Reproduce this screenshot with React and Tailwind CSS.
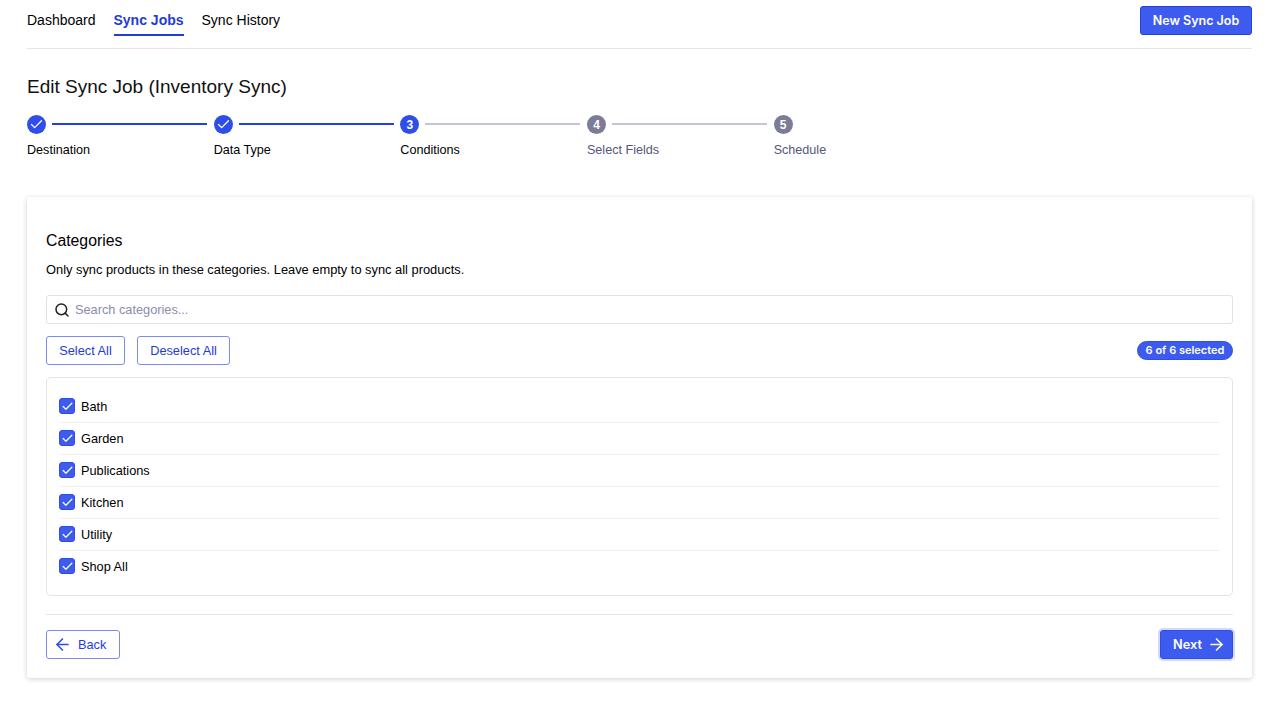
import React from 'react';
import { ArrowLeft, ArrowRight, Check, Search } from 'lucide-react';

const steps = [
  { label: 'Destination', state: 'done' },
  { label: 'Data Type', state: 'done' },
  { label: 'Conditions', state: 'active', n: 3 },
  { label: 'Select Fields', state: 'todo', n: 4 },
  { label: 'Schedule', state: 'todo', n: 5 },
];

const categories = ['Bath', 'Garden', 'Publications', 'Kitchen', 'Utility', 'Shop All'];

const Header = () => (
  <header className="h-[49px] flex justify-between border-b border-[#e6e6ea]">
    <nav className="flex gap-[18px] text-[14px] leading-[20px] text-black">
      <a className="pt-[10px]">Dashboard</a>
      <a className="pt-[10px] h-[36px] font-bold text-[#1f3bdc] border-b-2 border-[#1f3bdc]">Sync Jobs</a>
      <a className="pt-[10px]">Sync History</a>
    </nav>
    <button className="mt-[6px] h-[29px] w-[112px] pt-px rounded-[3px] bg-[#3e5bf0] border border-[#2340dc] text-white text-[12.5px] font-semibold font-['Inter',sans-serif]">
      New Sync Job
    </button>
  </header>
);

const Step = ({ step, last }) => (
  <div className={last ? 'w-[60px]' : 'w-[186.67px]'}>
    <div className="flex items-center h-[19px]">
      {step.state === 'done' && (
        <span className="w-[19px] h-[19px] shrink-0 rounded-full bg-[#2f4de8] flex items-center justify-center">
          <Check size={15} strokeWidth={2} className="text-white" />
        </span>
      )}
      {step.state === 'active' && (
        <span className="w-[19px] h-[19px] shrink-0 rounded-full bg-[#2f4de8] flex items-center justify-center text-white text-[12px] font-bold">
          {step.n}
        </span>
      )}
      {step.state === 'todo' && (
        <span className="w-[19px] h-[19px] shrink-0 rounded-full bg-[#7b7d98] flex items-center justify-center text-white text-[12px] font-bold">
          {step.n}
        </span>
      )}
      {!last && (
        <div className={`ml-[6px] mb-px w-[155px] h-[2px] ${step.state === 'done' ? 'bg-[#2440d8]' : 'bg-[#c3c3de]'}`} />
      )}
    </div>
    <div className={`mt-[7px] text-[12.6px] leading-[18px] whitespace-nowrap ${step.state === 'todo' ? 'text-[#55577a]' : 'text-black'}`}>
      {step.label}
    </div>
  </div>
);

const CategoryRow = ({ name, first }) => (
  <div className={`flex items-center h-[32px] gap-[6px] ${first ? '' : 'border-t border-[#f1f1f4] pb-px'}`}>
    <span className="w-[16px] h-[16px] rounded-[3px] bg-[#3e5bf0] border border-[#2f4de8] flex items-center justify-center">
      <Check size={13} strokeWidth={2.25} className="text-white" />
    </span>
    <span className="mt-[2px] text-[12.75px] leading-[18px] text-black">{name}</span>
  </div>
);

const App = () => {
  return (
    <div className="w-[1280px] h-[720px] bg-white pl-[27px] pr-[28px] overflow-hidden font-['Liberation_Sans',sans-serif]">
      <Header />

      <h1 className="mt-[25px] text-[19px] leading-[26px] text-[#111]">Edit Sync Job (Inventory Sync)</h1>

      <div className="flex mt-[15px]">
        {steps.map((s, i) => (
          <Step key={s.label} step={s} last={i === steps.length - 1} />
        ))}
      </div>

      <main className="mt-[38px] h-[481px] rounded-[3px] bg-white shadow-[0_1px_5px_rgba(30,30,60,0.22)] px-[19px] pt-[34px]">
        <h2 className="text-[15.8px] leading-[20px] text-black">Categories</h2>
        <p className="mt-[9px] text-[12.85px] leading-[20px] text-black">
          Only sync products in these categories. Leave empty to sync all products.
        </p>

        <div className="mt-[15px] h-[29px] flex items-center gap-[5px] px-[7px] rounded-[3px] border border-[#e2e2e6]">
          <Search size={16} strokeWidth={2.25} className="text-[#222]" />
          <span className="text-[12.75px] text-[#8c8cab]">Search categories...</span>
        </div>

        <div className="mt-[12px] flex items-center justify-between">
          <div className="flex gap-[12px]">
            <button className="h-[29px] w-[79px] rounded-[3px] border border-[#7b8cf0] text-[#1f3bdc] text-[12.75px]">Select All</button>
            <button className="h-[29px] w-[93px] rounded-[3px] border border-[#7b8cf0] text-[#1f3bdc] text-[12.75px]">Deselect All</button>
          </div>
          <span className="h-[19px] w-[96px] flex items-center justify-center rounded-full bg-[#3e5bf0] border border-[#2f4de8] text-white text-[11px] font-semibold font-['Inter',sans-serif]">
            6 of 6 selected
          </span>
        </div>

        <div className="mt-[12px] h-[219px] rounded-[5px] border border-[#e4e4e8] p-[12px]">
          {categories.map((c, i) => (
            <CategoryRow key={c} name={c} first={i === 0} />
          ))}
        </div>

        <div className="mt-[18px] pt-[15px] border-t border-[#e6e6ea] flex items-center justify-between">
          <button className="h-[29px] w-[74px] flex items-center pl-[6px] gap-[6px] rounded-[3px] border border-[#7b8cf0] text-[#1f3bdc] text-[12.75px]">
            <ArrowLeft size={19} strokeWidth={2} className="text-[#2f4de8]" />
            Back
          </button>
          <button className="h-[29px] w-[73px] flex items-center pl-[12px] gap-[5.5px] rounded-[3px] bg-[#3e5bf0] border border-[#2f4de8] ring-2 ring-[#d3dafc] text-white text-[12.75px] font-semibold font-['Inter',sans-serif]">
            Next
            <ArrowRight size={19} strokeWidth={2} />
          </button>
        </div>
      </main>
    </div>
  );
};

export default App;
